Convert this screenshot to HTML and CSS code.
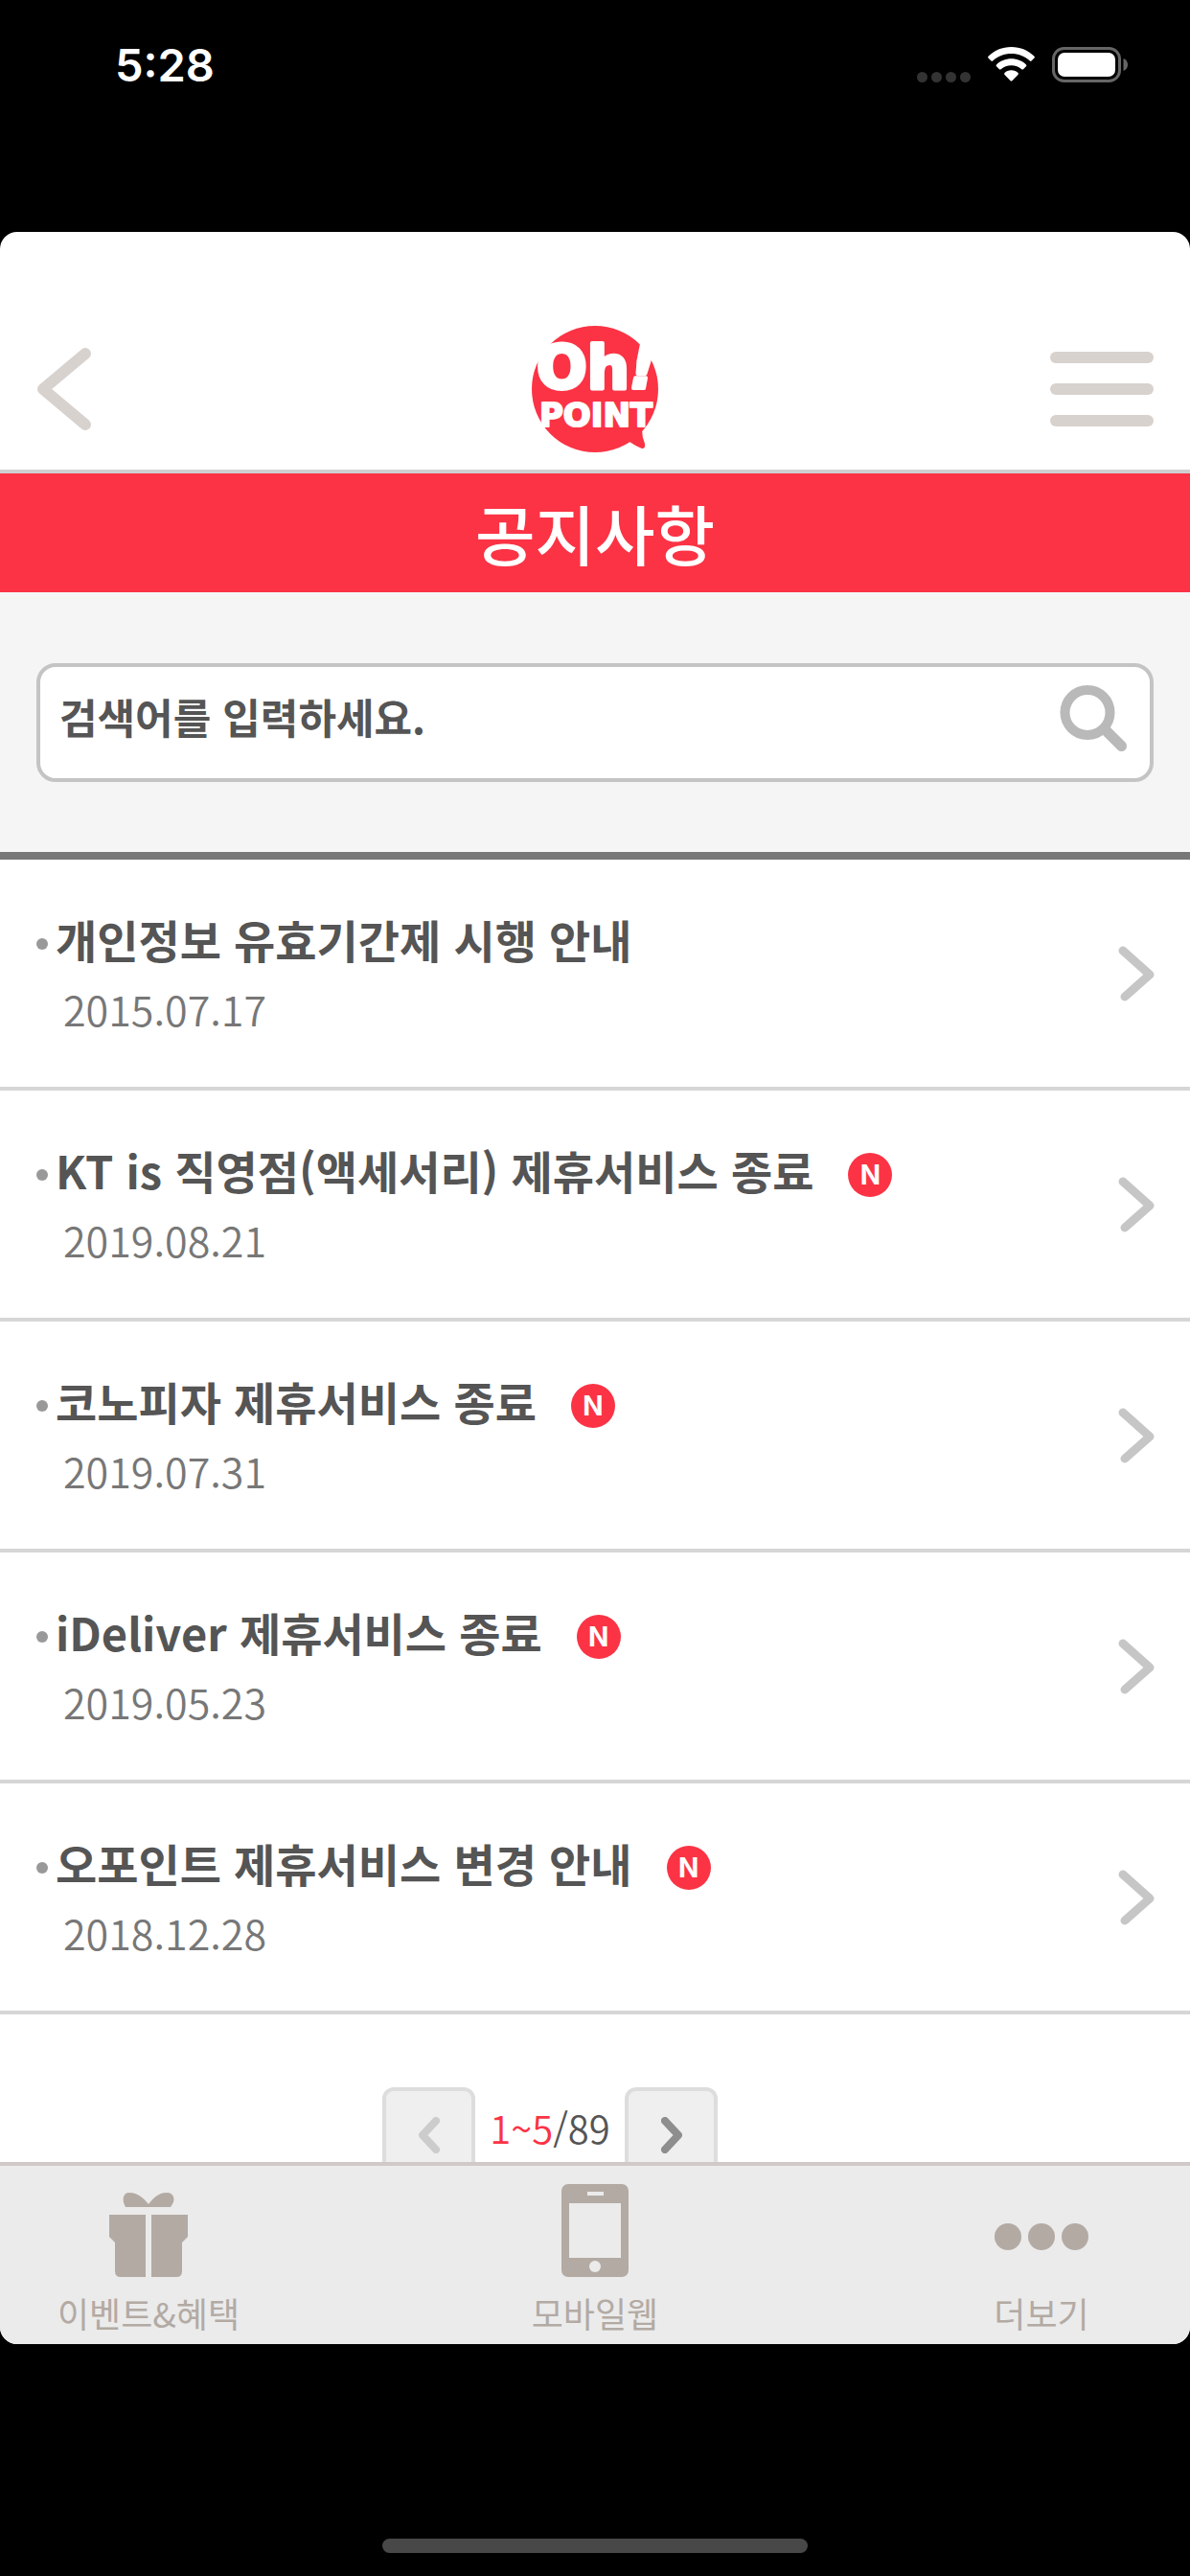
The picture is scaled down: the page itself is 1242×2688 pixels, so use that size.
FILE: index.html
```html
<!DOCTYPE html>
<html lang="ko">
<head>
  <meta charset="UTF-8">
  <meta name="viewport" content="width=device-width, initial-scale=1">
  <title>공지사항</title>
  <link rel="stylesheet" href="styles.css">
</head>
<body>

  <div class="status-bar">
    <span class="time">5:28</span>
    <div class="status-icons">
      <div class="signal"><i></i><i></i><i></i><i></i></div>
      <svg class="wifi" width="49" height="37" viewBox="0 0 49 37">
        <path fill="#fff" d="M24.5 0C34 0 42.500 3.700 48.500 9.800Q49.300 10.700 48.500 11.500L45.500 14.500Q44.700 15.300 43.900 14.500C38.500 9.500 32 7 24.500 7S10.500 9.500 5.100 14.500Q4.300 15.300 3.500 14.500L.5 11.500Q-.3 10.700.5 9.800C6.500 3.700 15 0 24.500 0Z"/>
        <path fill="#fff" d="M24.500 12.200C30.700 12.200 36 14.500 40 18.400Q40.900 19.300 40 20.200L37 23.200Q36.200 24 35.300 23.200C32.300 20.500 28.700 19.200 24.500 19.200S16.700 20.500 13.700 23.200Q12.800 24 12 23.200L9 20.200Q8.100 19.300 9 18.400C13 14.500 18.300 12.200 24.500 12.200Z"/>
        <path fill="#fff" d="M24.500 24.300C27.300 24.300 29.700 25.300 31.500 27Q32.400 27.900 31.500 28.900L25.400 35.200Q24.500 36.100 23.600 35.200L17.500 28.900Q16.600 27.900 17.500 27C19.300 25.300 21.700 24.300 24.500 24.300Z"/>
      </svg>
      <svg class="battery" width="80" height="37" viewBox="0 0 80 37">
        <rect x="1.500" y="1.500" width="69" height="34" rx="11" fill="none" stroke="#666" stroke-width="3"/>
        <rect x="6" y="6" width="60" height="25" rx="7" fill="#fff"/>
        <path fill="#666" d="M74.500 12C78 13.500 79 16 79 18.500S78 23.500 74.500 25Z"/>
      </svg>
    </div>
  </div>

  <div class="app">
    <header class="header">
      <button class="icon-btn" aria-label="뒤로">
        <svg width="57" height="86" viewBox="0 0 57 86">
          <path d="M51 6L7 43L51 80" fill="none" stroke="#d8d2ce" stroke-width="12" stroke-linecap="round" stroke-linejoin="round"/>
        </svg>
      </button>
      <a class="logo" href="#">
        <svg width="132" height="134" viewBox="0 0 132 134">
          <circle cx="66" cy="67" r="66" fill="#fb3345"/>
          <path fill="#fb3345" d="M98 119Q107 126 115 129Q119 129 118 124Q115 117 115 109Z"/>
          <g class="logo-text">
            <text class="logo-big" x="5" y="66">Oh<tspan class="logo-mark">!</tspan></text>
            <text class="logo-small" x="67" y="106" text-anchor="middle">POINT</text>
          </g>
        </svg>
      </a>
      <button class="icon-btn" aria-label="메뉴">
        <svg width="108" height="78" viewBox="0 0 108 78" fill="#d8d2ce">
          <rect width="108" height="12" rx="6"/>
          <rect y="33" width="108" height="12" rx="6"/>
          <rect y="66" width="108" height="12" rx="6"/>
        </svg>
      </button>
    </header>

    <h1 class="page-title">공지사항</h1>

    <main class="content">
      <div class="search">
        <form class="search-box">
          <input type="text" placeholder="검색어를 입력하세요." aria-label="검색어">
          <button class="icon-btn" type="button" aria-label="검색">
            <svg width="70" height="70" viewBox="0 0 70 70" fill="none" stroke="#b9b9b9">
              <circle cx="29" cy="28.500" r="23.500" stroke-width="10"/>
              <path d="M47 46L64.500 63.500" stroke-width="11" stroke-linecap="round"/>
            </svg>
          </button>
        </form>
      </div>

      <ul class="notices">
        <li>
          <a class="notice" href="#">
            <div>
              <div class="notice-title">개인정보 유효기간제 시행 안내</div>
              <div class="notice-date">2015.07.17</div>
            </div>
            <svg class="arrow" width="39" height="58" viewBox="0 0 39 58"><path d="M5 5L33 30L7 53"/></svg>
          </a>
        </li>
        <li>
          <a class="notice" href="#">
            <div>
              <div class="notice-title">KT is 직영점(액세서리) 제휴서비스 종료<span class="new">N</span></div>
              <div class="notice-date">2019.08.21</div>
            </div>
            <svg class="arrow" width="39" height="58" viewBox="0 0 39 58"><path d="M5 5L33 30L7 53"/></svg>
          </a>
        </li>
        <li>
          <a class="notice" href="#">
            <div>
              <div class="notice-title">코노피자 제휴서비스 종료<span class="new">N</span></div>
              <div class="notice-date">2019.07.31</div>
            </div>
            <svg class="arrow" width="39" height="58" viewBox="0 0 39 58"><path d="M5 5L33 30L7 53"/></svg>
          </a>
        </li>
        <li>
          <a class="notice" href="#">
            <div>
              <div class="notice-title">iDeliver 제휴서비스 종료<span class="new">N</span></div>
              <div class="notice-date">2019.05.23</div>
            </div>
            <svg class="arrow" width="39" height="58" viewBox="0 0 39 58"><path d="M5 5L33 30L7 53"/></svg>
          </a>
        </li>
        <li>
          <a class="notice" href="#">
            <div>
              <div class="notice-title">오포인트 제휴서비스 변경 안내<span class="new">N</span></div>
              <div class="notice-date">2018.12.28</div>
            </div>
            <svg class="arrow" width="39" height="58" viewBox="0 0 39 58"><path d="M5 5L33 30L7 53"/></svg>
          </a>
        </li>
      </ul>

      <div class="paging">
        <button class="page-btn prev" aria-label="이전">
          <svg width="22" height="38" viewBox="0 0 22 38"><path d="M18 4L4 19L18 34"/></svg>
        </button>
        <p class="page-count"><span>1~5</span>/89</p>
        <button class="page-btn next" aria-label="다음">
          <svg width="22" height="38" viewBox="0 0 22 38"><path d="M4 4L18 19L4 34"/></svg>
        </button>
      </div>
    </main>

    <nav class="tab-bar">
      <a href="#">
        <svg width="82" height="98" viewBox="0 0 82 98" fill="#b3aaa4">
          <path d="M17 24C13 17 14 9 21 9C30 9 36 15 41 21C46 15 51 9 60 9C68 9 70 17 64 24Z"/>
          <path d="M0 32H38V97H12Q6 97 6 91V61L0 55Z"/>
          <path d="M44 32H82V55L76 61V91Q76 97 70 97H44Z"/>
        </svg>
        이벤트&amp;혜택
      </a>
      <a href="#">
        <svg width="70" height="98" viewBox="0 0 70 98">
          <rect width="70" height="97" rx="7" fill="#b3aaa4"/>
          <rect x="27" y="8" width="17" height="4" fill="#ebebeb"/>
          <rect x="8" y="20" width="54" height="57" fill="#ebebeb"/>
          <circle cx="35" cy="86" r="6" fill="#ebebeb"/>
        </svg>
        모바일웹
      </a>
      <a href="#">
        <svg width="98" height="98" viewBox="0 0 98 98" fill="#b3aaa4">
          <circle cx="14" cy="55" r="14"/>
          <circle cx="49" cy="55" r="14"/>
          <circle cx="84" cy="55" r="14"/>
        </svg>
        더보기
      </a>
    </nav>
  </div>

  <div class="home-area">
    <div class="home-indicator"></div>
  </div>

</body>
</html>
```

FILE: styles.css
```css
* {
  box-sizing: border-box;
}

body {
  margin: 0;
  height: 100vh;
  display: flex;
  flex-direction: column;
  background: #000;
  color: #555;
  font-family: "Noto Sans CJK KR", sans-serif;
}

a {
  color: inherit;
  text-decoration: none;
}

svg {
  display: block;
}

/* status bar */
.status-bar {
  height: 242px;
  padding: 40px 64px 0 120px;
  display: flex;
  justify-content: space-between;
  align-items: flex-start;
}

.time {
  color: #fff;
  font-family: Inter, sans-serif;
  font-size: 47px;
  font-weight: 600;
  line-height: 56px;
}

.status-icons {
  display: flex;
  align-items: flex-end;
  gap: 18px;
  padding-top: 9px;
}

.signal {
  display: flex;
  gap: 4px;
}

.signal i {
  width: 11px;
  height: 11px;
  border-radius: 50%;
  background: #333;
}

/* app window */
.app {
  flex: 1;
  min-height: 0;
  display: flex;
  flex-direction: column;
  overflow: hidden;
  background: #fff;
  border-radius: 18px;
}

.icon-btn {
  padding: 0;
  border: none;
  background: none;
  cursor: pointer;
}

.header {
  display: grid;
  grid-template-columns: 1fr auto 1fr;
  align-items: center;
  padding: 97px 38px 17px;
  border-bottom: 4px solid #cfcfcf;
}

.header .icon-btn:first-child {
  justify-self: start;
}

.header .icon-btn:last-child {
  justify-self: end;
}

.logo-text {
  fill: #fff;
  stroke: #fff;
  stroke-linejoin: round;
  font-family: "DejaVu Sans", sans-serif;
  font-weight: 700;
}

.logo-big {
  font-size: 62px;
  stroke-width: 4px;
}

.logo-mark {
  font-style: italic;
}

.logo-small {
  font-size: 34px;
  stroke-width: 2px;
}

.page-title {
  margin: 0;
  background: #fb3345;
  color: #fff;
  font-size: 68px;
  font-weight: 500;
  line-height: 124px;
  text-align: center;
}

.content {
  flex: 1;
  min-height: 0;
  overflow: hidden;
}

/* search */
.search {
  padding: 74px 38px 73px;
  background: #f5f5f5;
  border-bottom: 8px solid #777;
}

.search-box {
  display: flex;
  align-items: center;
  height: 124px;
  padding: 0 24px 8px 20px;
  background: #fff;
  border: 4px solid #c4c4c4;
  border-radius: 20px;
}

.search-box input {
  flex: 1;
  min-width: 0;
  padding: 0 0 6px;
  border: none;
  outline: none;
  background: none;
  color: #555;
  font: inherit;
  font-size: 43px;
  font-weight: 700;
}

.search-box input::placeholder {
  color: #555;
  opacity: 1;
}

/* notice list */
.notices {
  margin: 0;
  padding: 0;
  list-style: none;
}

.notice {
  display: flex;
  justify-content: space-between;
  align-items: center;
  padding: 47px 36px 46px 38px;
  border-bottom: 4px solid #d6d6d6;
}

.notice-title {
  display: flex;
  align-items: center;
  font-size: 47px;
  font-weight: 700;
  line-height: 72px;
}

.notice-title::before {
  content: "";
  width: 12px;
  height: 12px;
  margin: 10px 8px 0 0;
  border-radius: 50%;
  background: #999;
}

.notice-date {
  padding-left: 28px;
  color: #777;
  font-size: 43px;
  font-weight: 350;
  line-height: 72px;
}

.new {
  width: 46px;
  height: 46px;
  margin: 10px 0 0 36px;
  border-radius: 50%;
  background: #fb3345;
  color: #fff;
  font-family: Inter, sans-serif;
  font-size: 28px;
  font-weight: 700;
  line-height: 46px;
  text-align: center;
}

.arrow path {
  fill: none;
  stroke: #c6c6c6;
  stroke-width: 9px;
  stroke-linecap: round;
  stroke-linejoin: round;
}

/* paging */
.paging {
  display: flex;
  justify-content: center;
  padding: 76px 94px 76px 0;
}

.page-btn {
  display: flex;
  justify-content: center;
  width: 97px;
  height: 97px;
  padding: 27px 0 0;
  background: #efefef;
  border: 4px solid #ddd;
  border-radius: 12px;
  cursor: pointer;
}

.page-btn path {
  fill: none;
  stroke: #ccc;
  stroke-width: 8px;
  stroke-linecap: round;
  stroke-linejoin: round;
}

.page-btn.next path {
  stroke: #8e8e8e;
}

.page-count {
  width: 156px;
  margin: 0;
  font-size: 40px;
  font-weight: 350;
  line-height: 84px;
  text-align: center;
}

.page-count span {
  color: #fb3345;
}

/* bottom tabs */
.tab-bar {
  display: flex;
  justify-content: space-between;
  padding: 19px 60px 11px;
  background: #ebebeb;
  border-top: 4px solid #d0c9c7;
}

.tab-bar a {
  display: flex;
  flex-direction: column;
  align-items: center;
  gap: 14px;
  width: 190px;
  color: #b3aaa4;
  font-size: 36px;
  line-height: 44px;
  white-space: nowrap;
}

.home-area {
  display: flex;
  justify-content: center;
  align-items: flex-end;
  height: 242px;
  padding-bottom: 24px;
}

.home-indicator {
  width: 444px;
  height: 15px;
  border-radius: 8px;
  background: #484848;
}
```
